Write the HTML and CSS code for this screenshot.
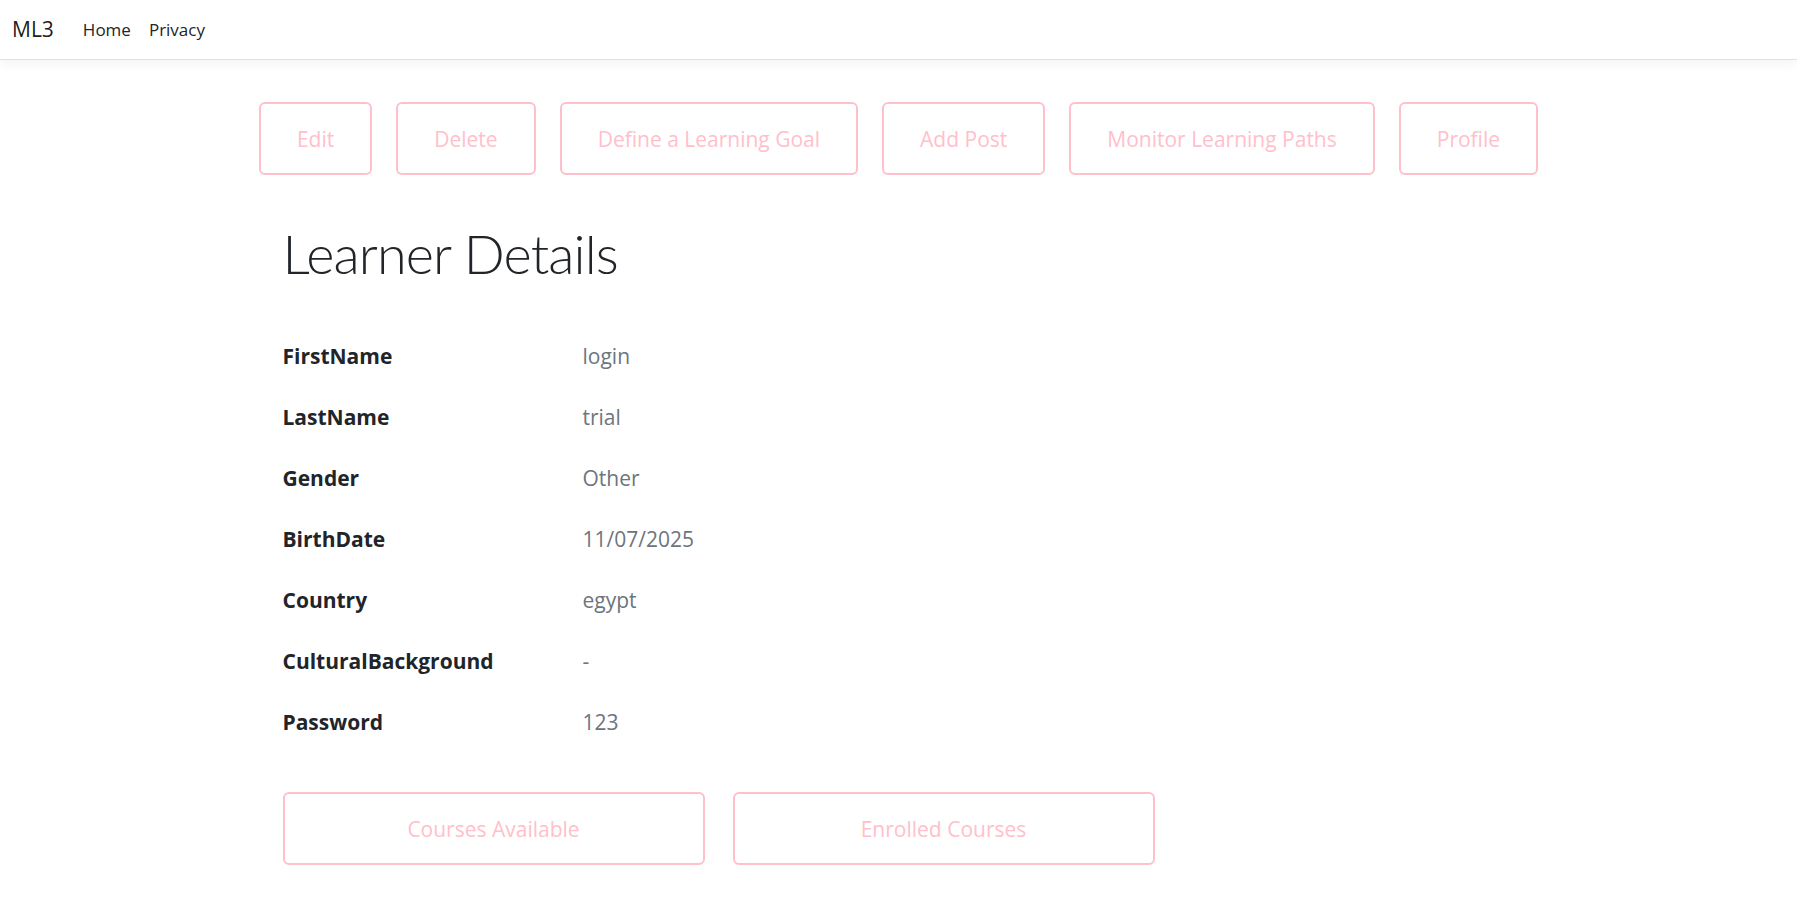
FILE: index.html
```html
<!DOCTYPE html>
<html lang="en">
<head>
<meta charset="utf-8">
<title>Learner Details - ML3</title>
<link rel="stylesheet" href="styles.css">
</head>
<body>
<header class="navbar">
  <a class="brand" href="#">ML3</a>
  <nav class="nav">
    <a class="nav-link" href="#">Home</a>
    <a class="nav-link" href="#">Privacy</a>
  </nav>
</header>
<main class="container">
  <div class="actions">
    <a class="btn" href="#">Edit</a>
    <a class="btn" href="#">Delete</a>
    <a class="btn" href="#">Define a Learning Goal</a>
    <a class="btn" href="#">Add Post</a>
    <a class="btn" href="#">Monitor Learning Paths</a>
    <a class="btn" href="#">Profile</a>
  </div>
  <section class="details">
    <h1 class="title">Learner Details</h1>
    <dl class="fields">
      <dt>FirstName</dt><dd>login</dd>
      <dt>LastName</dt><dd>trial</dd>
      <dt>Gender</dt><dd>Other</dd>
      <dt>BirthDate</dt><dd>11/07/2025</dd>
      <dt>Country</dt><dd>egypt</dd>
      <dt>CulturalBackground</dt><dd>-</dd>
      <dt>Password</dt><dd>123</dd>
    </dl>
    <div class="course-actions">
      <a class="btn btn-wide" href="#">Courses Available</a>
      <a class="btn btn-wide" href="#">Enrolled Courses</a>
    </div>
  </section>
</main>
</body>
</html>
```
FILE: styles.css
```css
* { box-sizing: border-box; }
html, body { margin: 0; padding: 0; }
body {
  font-family: "Open Sans", "Noto Sans", "Liberation Sans", sans-serif;
  color: #212529;
  background: #fff;
  font-size: 16px;
  line-height: 1.5;
}
a { text-decoration: none; }

.navbar {
  display: flex;
  align-items: center;
  height: 60px;
  padding: 0 12px;
  background: #fff;
  border-bottom: 1px solid #dee2e6;
  box-shadow: 0 4px 12px rgba(0,0,0,0.05);
}
.brand {
  font-size: 21px;
  color: rgba(0,0,0,0.9);
  margin-right: 20px;
}
.nav { display: flex; }
.nav-link {
  color: #212529;
  font-size: 17px;
  padding: 8px 9px;
}

.container {
  max-width: 1320px;
  margin: 0 auto;
  padding: 0 12px;
}
.actions {
  display: flex;
  justify-content: center;
  gap: 24px;
  margin-top: 42px;
}
.btn {
  display: inline-flex;
  align-items: center;
  justify-content: center;
  height: 73px;
  padding: 2px 36px 0;
  border: 2px solid #ffc0cb;
  border-radius: 6px;
  color: #ffc0cb;
  font-size: 21px;
  background: #fff;
  white-space: nowrap;
}
.details { padding-left: 32px; }
.title {
  font-family: "Lato", "Open Sans", sans-serif;
  font-size: 54px;
  font-weight: 300;
  letter-spacing: -0.9px;
  line-height: 1.2;
  margin: 47px 0 39px;
}
.fields {
  display: grid;
  grid-template-columns: 300px 1fr;
  grid-auto-rows: 61px;
  align-items: center;
  margin: 0;
  font-size: 21px;
}
.fields dt { font-weight: 700; color: #212529; }
.fields dd { margin: 0; color: #6c757d; }
.course-actions {
  display: flex;
  gap: 28px;
  margin-top: 39px;
}
.btn-wide { width: 422px; }
```
